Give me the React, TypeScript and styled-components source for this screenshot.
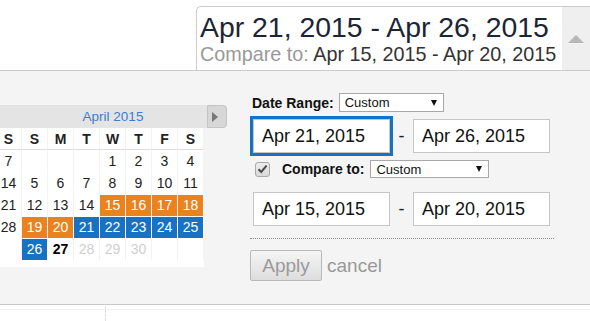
import React from 'react'
import styled, { createGlobalStyle } from 'styled-components'

const GlobalStyle = createGlobalStyle`
  html, body {
    margin: 0;
    padding: 0;
    background: #fff;
    overflow: hidden;
  }
  body {
    font-family: "Liberation Sans", Arial, sans-serif;
    color: #222;
  }
`

const colors = {
  panel: '#f4f4f4',
  border: '#cccccc',
  orange: '#e9821f',
  blue: '#1672c4',
  link: '#3b7dd0',
  muted: '#999999',
}

const Page = styled.div`
  width: 590px;
  height: 321px;
  display: flex;
  flex-direction: column;
`

const TopBar = styled.div`
  height: 70px;
  display: flex;
  justify-content: flex-end;
  align-items: flex-end;
`

const RangeBox = styled.div`
  width: 394px;
  height: 64px;
  box-sizing: border-box;
  border: 1px solid ${colors.border};
  border-right: none;
  border-bottom: none;
  border-top-left-radius: 5px;
  background: #fff;
  display: flex;
`

const RangeText = styled.div`
  flex: 1;
  padding: 5px 0 0 3px;
  white-space: nowrap;
`

const RangeMain = styled.div`
  font-size: 28.4px;
  line-height: 30px;
  color: #1b2535;
`

const RangeCompare = styled.div`
  margin-top: 1px;
  font-size: 19.8px;
  line-height: 22px;
  color: #333;

  span {
    color: ${colors.muted};
  }
`

const Toggle = styled.div`
  width: 28px;
  background: #efefef;
  display: flex;
  align-items: center;
  justify-content: center;

  &:after {
    content: '';
    border-left: 8.5px solid transparent;
    border-right: 8.5px solid transparent;
    border-bottom: 8px solid #b8b8b8;
  }
`

const Panel = styled.div`
  height: 233px;
  flex-shrink: 0;
  border-top: 1px solid ${colors.border};
  border-bottom: 1px solid #c8c8c8;
  background: ${colors.panel};
  display: flex;
  align-items: flex-start;
`

const CalendarPane = styled.div`
  width: 227px;
  flex-shrink: 0;
  margin-top: 34px;
  overflow: hidden;
  display: flex;
  justify-content: flex-end;
  align-items: flex-start;
`

const Month = styled.div`
  width: 182px;
  flex-shrink: 0;
`

const MonthTitle = styled.div`
  height: 23px;
  line-height: 23px;
  background: #e4e4e4;
  text-align: center;
  font-size: 13.5px;
  color: ${colors.link};
`

const DayGrid = styled.div`
  display: grid;
  grid-template-columns: repeat(7, 26px);
  grid-auto-rows: 22px;
  background: #fff;
  padding-bottom: 7px;
`

const Weekday = styled.div`
  box-sizing: border-box;
  border-bottom: 1px solid #dddddd;
  border-right: 1px solid #f2f2f2;
  font-size: 14px;
  font-weight: bold;
  line-height: 22px;
  text-align: center;
  color: #222;
`

type DayKind = 'plain' | 'compare' | 'range' | 'today' | 'future' | 'empty'

const dayBackground: Record<DayKind, string> = {
  plain: '#fff',
  compare: colors.orange,
  range: colors.blue,
  today: '#fff',
  future: '#fff',
  empty: '#fff',
}

const dayColor: Record<DayKind, string> = {
  plain: '#222',
  compare: '#fff',
  range: '#fff',
  today: '#000',
  future: '#cfcfcf',
  empty: '#222',
}

const Day = styled.div<{ $kind: DayKind }>`
  box-sizing: border-box;
  border-top: 1px solid #fff;
  border-right: 1px solid
    ${({ $kind }) => ($kind === 'compare' || $kind === 'range' ? '#fff' : '#f2f2f2')};
  background: ${({ $kind }) => dayBackground[$kind]};
  color: ${({ $kind }) => dayColor[$kind]};
  font-weight: ${({ $kind }) => ($kind === 'today' ? 'bold' : 'normal')};
  font-size: 14px;
  line-height: 21px;
  text-align: center;
`

const Nav = styled.div`
  width: 23px;
  height: 23px;
  flex-shrink: 0;
  box-sizing: border-box;
  padding-left: 3px;
  background: #e4e4e4;
  border-radius: 0 4px 4px 0;
`

const NextButton = styled.div`
  width: 20px;
  height: 23px;
  box-sizing: border-box;
  background: #d7d7d7;
  border: 1px solid #c4c4c4;
  border-radius: 0 4px 4px 0;
  display: flex;
  align-items: center;
  padding-left: 4px;

  &:after {
    content: '';
    border-top: 5px solid transparent;
    border-bottom: 5px solid transparent;
    border-left: 6px solid #777;
  }
`

const Form = styled.div`
  margin-left: 24px;
  padding-top: 22px;
  display: flex;
  flex-direction: column;
`

const FieldRow = styled.div<{ $top?: number }>`
  margin-top: ${({ $top }) => $top || 0}px;
  display: flex;
  align-items: center;
`

const Label = styled.span<{ $gap?: number }>`
  font-size: 14px;
  font-weight: bold;
  color: #111;
  margin-left: ${({ $gap }) => $gap || 0}px;
`

const SelectBox = styled.div<{ $width: number; $height: number; $gap: number }>`
  width: ${({ $width }) => $width}px;
  height: ${({ $height }) => $height}px;
  margin-left: ${({ $gap }) => $gap}px;
  box-sizing: border-box;
  border: 1px solid #a8a8a8;
  background: #fff;
  display: flex;
  align-items: center;
  justify-content: space-between;
  padding: 0 6px 0 5px;
  font-size: 13px;
  color: #111;

  &:after {
    content: '';
    border-left: 3.5px solid transparent;
    border-right: 3.5px solid transparent;
    border-top: 6px solid #111;
  }
`

const Checkbox = styled.span`
  width: 15px;
  height: 15px;
  margin-left: 4px;
  box-sizing: border-box;
  border: 1px solid #a9a9a9;
  border-radius: 3px;
  background: linear-gradient(#ededed, #d8d8d8);
  display: flex;
  align-items: center;
  justify-content: center;
`

const InputsRow = styled.div<{ $top: number }>`
  margin-top: ${({ $top }) => $top}px;
  margin-left: 2px;
  display: grid;
  grid-template-columns: 137px 23px 137px;
  align-items: center;
`

const DateInput = styled.input<{ $focused?: boolean }>`
  width: 137px;
  height: 34px;
  box-sizing: border-box;
  border: 1px solid #c6c6c6;
  background: #fff;
  padding: 0 8px;
  font-family: "Liberation Sans", Arial, sans-serif;
  font-size: 18px;
  color: #111;
  outline: ${({ $focused }) => ($focused ? `3px solid ${colors.blue}` : 'none')};
`

const Dash = styled.span`
  text-align: center;
  font-size: 18px;
  color: #222;
`

const Divider = styled.div`
  margin-top: 12px;
  margin-left: -1px;
  width: 304px;
  border-top: 1px dotted #8a8a8a;
`

const Actions = styled.div`
  margin-top: 11px;
  display: flex;
  align-items: center;
`

const ApplyButton = styled.button`
  width: 72px;
  height: 31px;
  margin-left: -1px;
  padding: 0;
  border: 1px solid #b9b9b9;
  border-radius: 2px;
  background: linear-gradient(#f5f5f5, #dddddd);
  font-family: "Liberation Sans", Arial, sans-serif;
  font-size: 19px;
  color: #9a9a9a;
`

const CancelLink = styled.span`
  margin-left: 5px;
  font-size: 19px;
  color: #999;
`

const Footer = styled.div`
  flex: 1;
  padding-top: 4px;
  display: flex;
  flex-direction: column;
`

const FooterRow = styled.div`
  flex: 1;
  border-top: 1px solid #f0f0f0;
  display: flex;
`

const FooterCell = styled.div`
  width: 105px;
  margin-top: -4px;
  border-right: 1px dashed #dcdcdc;
`

const weekdays = ['S', 'M', 'T', 'W', 'T', 'F', 'S']

type DayItem = { label: string; kind: DayKind }

const buildMarch = (): DayItem[] => {
  const days: DayItem[] = []
  for (let d = 1; d <= 31; d++) days.push({ label: String(d), kind: 'plain' })
  while (days.length < 35) days.push({ label: '', kind: 'empty' })
  return days
}

const buildApril = (): DayItem[] => {
  const days: DayItem[] = [
    { label: '', kind: 'empty' },
    { label: '', kind: 'empty' },
    { label: '', kind: 'empty' },
  ]
  for (let d = 1; d <= 30; d++) {
    let kind: DayKind = 'plain'
    if (d >= 15 && d <= 20) kind = 'compare'
    else if (d >= 21 && d <= 26) kind = 'range'
    else if (d === 27) kind = 'today'
    else if (d > 27) kind = 'future'
    days.push({ label: String(d), kind })
  }
  while (days.length < 35) days.push({ label: '', kind: 'empty' })
  return days
}

const MonthView = ({ title, days }: { title: string; days: DayItem[] }) => (
  <Month>
    <MonthTitle>{title}</MonthTitle>
    <DayGrid>
      {weekdays.map((w, i) => (
        <Weekday key={`w${i}`}>{w}</Weekday>
      ))}
      {days.map((d, i) => (
        <Day key={i} $kind={d.kind}>
          {d.label}
        </Day>
      ))}
    </DayGrid>
  </Month>
)

const App = () => (
  <Page>
    <GlobalStyle />
    <TopBar>
      <RangeBox>
        <RangeText>
          <RangeMain>Apr 21, 2015 - Apr 26, 2015</RangeMain>
          <RangeCompare>
            <span>Compare to: </span>Apr 15, 2015 - Apr 20, 2015
          </RangeCompare>
        </RangeText>
        <Toggle />
      </RangeBox>
    </TopBar>
    <Panel>
      <CalendarPane>
        <MonthView title="March 2015" days={buildMarch()} />
        <MonthView title="April 2015" days={buildApril()} />
        <Nav>
          <NextButton />
        </Nav>
      </CalendarPane>
      <Form>
        <FieldRow>
          <Label $gap={1}>Date Range:</Label>
          <SelectBox $width={105} $height={19} $gap={5}>
            Custom
          </SelectBox>
        </FieldRow>
        <InputsRow $top={7}>
          <DateInput $focused readOnly value="Apr 21, 2015" />
          <Dash>-</Dash>
          <DateInput readOnly value="Apr 26, 2015" />
        </InputsRow>
        <FieldRow $top={7}>
          <Checkbox>
            <svg width="11" height="10" viewBox="0 0 11 10">
              <path
                d="M1.5 5.2 L4.2 8 L9.6 1.6"
                fill="none"
                stroke="#4a4a4a"
                strokeWidth="2"
              />
            </svg>
          </Checkbox>
          <Label $gap={12}>Compare to:</Label>
          <SelectBox $width={119} $height={18} $gap={6}>
            Custom
          </SelectBox>
        </FieldRow>
        <InputsRow $top={14}>
          <DateInput readOnly value="Apr 15, 2015" />
          <Dash>-</Dash>
          <DateInput readOnly value="Apr 20, 2015" />
        </InputsRow>
        <Divider />
        <Actions>
          <ApplyButton>Apply</ApplyButton>
          <CancelLink>cancel</CancelLink>
        </Actions>
      </Form>
    </Panel>
    <Footer>
      <FooterRow>
        <FooterCell />
      </FooterRow>
    </Footer>
  </Page>
)

export default App
